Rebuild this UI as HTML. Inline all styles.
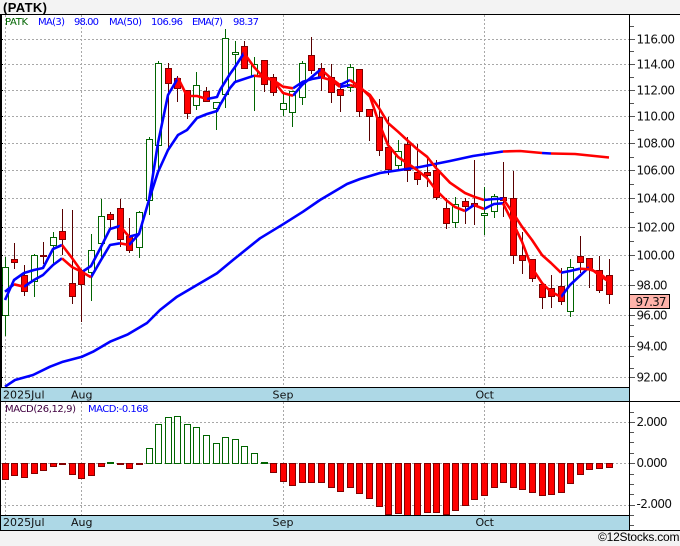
<!DOCTYPE html>
<html><head><meta charset="utf-8"><style>
html,body{margin:0;padding:0;width:680px;height:546px;overflow:hidden;background:#f3f3f3}
svg{display:block}
text{font-family:"DejaVu Sans","Liberation Sans",sans-serif;font-size:11px;fill:#000}
.l{font-size:10px;fill:#0000ff}
.b{font-size:12px;fill:#111}
.d{font-size:11px;fill:#111}
</style></head><body>
<svg width="680" height="546" viewBox="0 0 680 546" xmlns="http://www.w3.org/2000/svg">
<rect x="0" y="14" width="680" height="517" fill="#fff"/>
<path fill="none" stroke="#a8a8a8" stroke-dasharray="2 2" d="M0 39.5H630M0 64.5H630M0 90.5H630M0 116.5H630M0 143.5H630M0 170.5H630M0 198.5H630M0 227.5H630M0 255.5H630M0 285.5H630M0 315.5H630M0 346.5H630M0 377.5H630M0 422.5H630M0 463.5H630M0 505.5H630M5.5 15V388M81.5 15V388M283.5 15V388M484.5 15V388M5.5 402V515M81.5 402V515M283.5 402V515M484.5 402V515"/>
<!-- wicks -->
<path fill="none" stroke="#006400" d="M5.5 257V336M34.5 254V297M53.5 232V264M91.5 234V301M101.5 199V258M139.5 211V258M149.5 137V215M158.5 61V170M196.5 72V110M216.5 102V130M225.5 29V108M235.5 41V83M254.5 57V111M283.5 93V116M292.5 91V127M302.5 61V105M350.5 64V92M398.5 140V170M455.5 197V228M484.5 187V235M494.5 194V218M570.5 259V317"/>
<path fill="none" stroke="#580000" d="M14.5 243V269M24.5 265V296M43.5 242V264M62.5 209V255M72.5 210V304M81.5 269V322M110.5 212V229M120.5 199V247M129.5 218V253M168.5 63V148M177.5 76V102M187.5 90V119M206.5 87V102M244.5 41V68M264.5 60V92M273.5 74V96M311.5 37V74M321.5 63V91M331.5 64V103M340.5 83V112M359.5 69V117M369.5 109V141M379.5 99V156M388.5 117V175M407.5 137V182M417.5 144V185M427.5 158V187M436.5 160V200M446.5 198V229M465.5 198V224M474.5 160V225M503.5 162V217M513.5 171V264M522.5 232V274M532.5 259V282M542.5 282V309M551.5 275V308M561.5 268V305M580.5 236V273M589.5 258V288M599.5 256V293M609.5 259V304"/>
<!-- green bodies -->
<path fill="#fff" stroke="#006400" d="M2.5 267.5h6v48h-6zM31.5 255.5h6v26h-6zM50.5 237.5h6v8h-6zM88.5 250.5h6v22h-6zM98.5 216.5h6v27h-6zM136.5 212.5h6v35h-6zM146.5 139.5h6v61h-6zM155.5 63.5h6v82h-6zM193.5 85.5h6v20h-6zM213.5 102.5h6v6h-6zM222.5 38.5h6v56h-6zM232.5 52.5h6v2h-6zM251.5 64.5h6v11h-6zM280.5 103.5h6v6h-6zM289.5 91.5h6v21h-6zM299.5 63.5h6v34h-6zM347.5 67.5h6v20h-6zM395.5 151.5h6v14h-6zM452.5 204.5h6v18h-6zM481.5 213.5h6v2h-6zM491.5 196.5h6v15h-6zM567.5 267.5h6v44h-6z"/>
<!-- red bodies -->
<path fill="#ff0000" stroke="#800000" d="M11.5 259.5h6v3h-6zM21.5 275.5h6v16h-6zM40.5 255.5h6v1h-6zM59.5 231.5h6v8h-6zM69.5 283.5h6v13h-6zM78.5 270.5h6v14h-6zM107.5 214.5h6v5h-6zM117.5 208.5h6v31h-6zM126.5 236.5h6v14h-6zM165.5 68.5h6v15h-6zM174.5 78.5h6v10h-6zM184.5 90.5h6v23h-6zM203.5 91.5h6v10h-6zM241.5 46.5h6v22h-6zM261.5 60.5h6v24h-6zM270.5 77.5h6v15h-6zM308.5 55.5h6v15h-6zM318.5 68.5h6v9h-6zM328.5 77.5h6v15h-6zM337.5 89.5h6v6h-6zM356.5 69.5h6v42h-6zM366.5 109.5h6v7h-6zM376.5 117.5h6v33h-6zM385.5 147.5h6v22h-6zM404.5 144.5h6v26h-6zM414.5 172.5h6v7h-6zM424.5 172.5h6v3h-6zM433.5 170.5h6v27h-6zM443.5 208.5h6v15h-6zM462.5 201.5h6v5h-6zM471.5 203.5h6v3h-6zM500.5 197.5h6v3h-6zM510.5 198.5h6v57h-6zM519.5 255.5h6v5h-6zM529.5 259.5h6v19h-6zM539.5 284.5h6v13h-6zM548.5 288.5h6v8h-6zM558.5 286.5h6v15h-6zM577.5 256.5h6v6h-6zM586.5 258.5h6v10h-6zM596.5 270.5h6v20h-6zM606.5 275.5h6v19h-6z"/>
<!-- lines -->
<path fill="none" stroke="#0000ff" stroke-width="2.6" stroke-linejoin="round" d="M5 386.7L15 380L33 375L50 366.7L63 361.7L82 356.7L93 351.7L110 341.7L128 334.3L147 323L160 310L177 296.7L197 285L217 273.3L233 260L260 238.3L283 224.3L303 211.7L320 200L347 184L360 179L380 173L420 167L450 161L473 156L503 151.5M542 153L551 153.5M5 300L14 280L24 273L34 270L43 268L53 249L62 245M82 272L91 266L101 247L110 229L120 226M129 236.7L139 234L149 200L158 143L168 95L178 78M207 99L217 97L220 90L230 74L235 67L244 53M293 95.7L302 85L312 76.7L321 69.3M340 85L350 80M465 211L474 205M484 209L494 204L503 203.3M561 297L570 285L589 267.3M5 291.7L14 284.3M24 286.7L34 280L43 275L53 265L62 258.3M91 277.3L101 260L110 245L120 243.3M129 245L139 234L149 200L158 172L168 150L178 135L187 130L197 118L207 114L217 111L220 105L230 88L235 82L254 75.7M293 88.3L303 81.7L312 79L321 77.3M340 87L350 85M484 200L494 199L503 198.7M561 272.7L570 271L580 268.7"/>
<path fill="none" stroke="#ff0000" stroke-width="2.6" stroke-linejoin="round" d="M503 151.5L520 151L542 153M551 153.5L575 154L609 157.5M62 245L72 258L82 272M120 226L129 236.7M178 78L187 96L197 96L207 99M244 53L254 67L264 78L273 80L283 93L293 95.7M321 69.3L331 78.3L340 85M350 80L360 87L370 96.7L379 123L388 145L398 157L407 163L417 170L427 178L436 190L446 200L455 207L465 211M474 205L484 209M503 203.3L513 223L522 241.7L532 268L542 283L551 291.7L561 297M589 267.3L599 275L609 281.7M14 284.3L24 286.7M62 258.3L72 267L82 272L91 277.3M120 243.3L129 245M254 75.7L264 76.7L273 80L283 86.7L293 88.3M321 77.3L331 80L340 87M350 85L360 88L370 95L379 108L388 123L398 131.7L407 140L417 149L427 156.7L436 168L450 182.7L465 193L474 196.7L484 200M503 198.7L513 213L522 226.7L532 240L542 255L551 263L561 272.7M580 268.7L589 269.3L599 272.7L609 281"/>
<!-- MACD bars -->
<path fill="#ff0000" stroke="#800000" d="M2.5 463.5h6v16h-6zM11.5 463.5h6v12h-6zM21.5 463.5h6v14h-6zM31.5 463.5h6v10h-6zM40.5 463.5h6v7h-6zM50.5 463.5h6v3h-6zM59.5 463.5h6v1h-6zM69.5 463.5h6v11h-6zM78.5 463.5h6v15h-6zM88.5 463.5h6v12h-6zM98.5 463.5h6v3h-6zM117.5 463.5h6v1h-6zM126.5 463.5h6v5h-6zM136.5 463.5h6v1h-6zM270.5 463.5h6v9h-6zM280.5 463.5h6v18h-6zM289.5 463.5h6v22h-6zM299.5 463.5h6v19h-6zM308.5 463.5h6v19h-6zM318.5 463.5h6v19h-6zM328.5 463.5h6v24h-6zM337.5 463.5h6v28h-6zM347.5 463.5h6v24h-6zM356.5 463.5h6v30h-6zM366.5 463.5h6v35h-6zM376.5 463.5h6v43h-6zM385.5 463.5h6v51h-6zM395.5 463.5h6v50h-6zM404.5 463.5h6v52h-6zM414.5 463.5h6v52h-6zM424.5 463.5h6v49h-6zM433.5 463.5h6v49h-6zM443.5 463.5h6v51h-6zM452.5 463.5h6v47h-6zM462.5 463.5h6v42h-6zM471.5 463.5h6v36h-6zM481.5 463.5h6v32h-6zM491.5 463.5h6v24h-6zM500.5 463.5h6v19h-6zM510.5 463.5h6v24h-6zM519.5 463.5h6v26h-6zM529.5 463.5h6v29h-6zM539.5 463.5h6v32h-6zM548.5 463.5h6v31h-6zM558.5 463.5h6v29h-6zM567.5 463.5h6v20h-6zM577.5 463.5h6v11h-6zM586.5 463.5h6v6h-6zM596.5 463.5h6v5h-6zM606.5 463.5h6v4h-6z"/>
<path fill="#fff" stroke="#006400" d="M107.5 462.5h6v1h-6zM146.5 448.5h6v15h-6zM155.5 424.5h6v39h-6zM165.5 417.5h6v46h-6zM174.5 416.5h6v47h-6zM184.5 424.5h6v39h-6zM193.5 427.5h6v36h-6zM203.5 435.5h6v28h-6zM213.5 443.5h6v20h-6zM222.5 437.5h6v26h-6zM232.5 439.5h6v24h-6zM241.5 446.5h6v17h-6zM251.5 453.5h6v10h-6zM261.5 462.5h6v1h-6z"/>
<!-- strips -->
<rect x="0" y="388" width="630" height="13" fill="#add8e6"/>
<rect x="0" y="516" width="630" height="14" fill="#add8e6"/>
<path fill="none" stroke="#000" d="M0 14.5H680M0 387.5H630M0 401.5H680M0 515.5H630M0 530.5H680M0.5 14V531M629.5 14V531"/>
<path fill="none" stroke="#000" d="M0 39.5H3M0 64.5H3M0 90.5H3M0 116.5H3M0 143.5H3M0 170.5H3M0 198.5H3M0 227.5H3M0 255.5H3M0 285.5H3M0 315.5H3M0 346.5H3M0 377.5H3M1.5 14V388"/>
<path fill="none" stroke="#555" d="M630 39.5H635M630 64.5H635M630 90.5H635M630 116.5H635M630 143.5H635M630 170.5H635M630 198.5H635M630 227.5H635M630 255.5H635M630 285.5H635M630 315.5H635M630 346.5H635M630 377.5H635M630 26.5H634M630 51.5H634M630 77.5H634M630 103.5H634M630 130.5H634M630 157.5H634M630 184.5H634M630 212.5H634M630 241.5H634M630 270.5H634M630 325.5H634M630 336.5H634M630 356.5H634M630 368.5H634M630 422.5H635M630 463.5H635M630 505.5H635M630 412.5H634M630 432.5H634M630 442.5H634M630 453.5H634M630 474.5H634M630 484.5H634M630 494.5H634M630 515.5H634M630 525.5H634"/>
<!-- title & legend -->
<text x="3" y="12" style="font-family:'Liberation Sans',sans-serif;font-weight:bold;font-size:13px" textLength="44" fill="#000">(PATK)</text>
<text class="l" x="5" y="25" textLength="23" style="fill:#006400">PATK</text>
<text class="l" x="38" y="25" textLength="27">MA(3)</text>
<text class="l" x="74" y="25" textLength="25">98.00</text>
<text class="l" x="109" y="25" textLength="33">MA(50)</text>
<text class="l" x="151" y="25" textLength="32">106.96</text>
<text class="l" x="192" y="25" textLength="31">EMA(7)</text>
<text class="l" x="233" y="25" textLength="26">98.37</text>
<text class="l" x="5" y="412" textLength="71" style="fill:#400040">MACD(26,12,9)</text>
<text class="l" x="88" y="412" textLength="60.5">MACD:-0.168</text>
<!-- axis -->
<text class="b" x="636.5" y="43.5" textLength="38.5">116.00</text>
<text class="b" x="636.5" y="68.5" textLength="38.5">114.00</text>
<text class="b" x="636.5" y="94.5" textLength="38.5">112.00</text>
<text class="b" x="636.5" y="120.5" textLength="38.5">110.00</text>
<text class="b" x="636.5" y="147.5" textLength="38.5">108.00</text>
<text class="b" x="636.5" y="174.5" textLength="38.5">106.00</text>
<text class="b" x="636.5" y="202.5" textLength="38.5">104.00</text>
<text class="b" x="636.5" y="231.5" textLength="38.5">102.00</text>
<text class="b" x="636.5" y="259.5" textLength="38.5">100.00</text>
<text class="b" x="636.5" y="289.5" textLength="31">98.00</text>
<text class="b" x="636.5" y="319.5" textLength="31">96.00</text>
<text class="b" x="636.5" y="350.5" textLength="31">94.00</text>
<text class="b" x="636.5" y="381.5" textLength="31">92.00</text>
<rect x="629.5" y="294.5" width="40" height="14" fill="#ffb3aa" stroke="#000"/>
<text class="b" x="635.5" y="306" textLength="31">97.37</text>
<text class="b" x="636.5" y="426" textLength="31">2.000</text>
<text class="b" x="636.5" y="467" textLength="31">0.000</text>
<text class="b" x="636.5" y="508" textLength="35.5">-2.000</text>
<!-- dates -->
<text class="d" x="3" y="398.5" textLength="41.5">2025Jul</text>
<text class="d" x="71" y="398.5" textLength="21.5">Aug</text>
<text class="d" x="272.5" y="398.5" textLength="21">Sep</text>
<text class="d" x="475.5" y="398.5" textLength="18.5">Oct</text>
<text class="d" x="3" y="526" textLength="41.5">2025Jul</text>
<text class="d" x="71" y="526" textLength="21.5">Aug</text>
<text class="d" x="272.5" y="526" textLength="21">Sep</text>
<text class="d" x="475.5" y="526" textLength="18.5">Oct</text>
<text x="598" y="541" textLength="81.5" style="font-family:'Liberation Sans',sans-serif;font-size:12px" fill="#222">©12Stocks.com</text>
</svg>
</body></html>
